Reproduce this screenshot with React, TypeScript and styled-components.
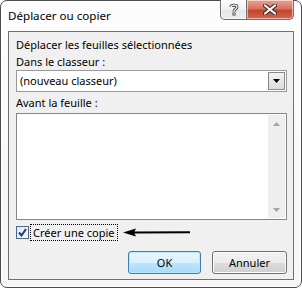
import React from "react";
import styled, { createGlobalStyle } from "styled-components";

const Global = createGlobalStyle`
  html, body { margin: 0; padding: 0; background: #ffffff; }
  * { box-sizing: border-box; }
  body { font-family: "Noto Sans", "Open Sans", sans-serif; font-size: 11px; color: #000; }
`;

const Window = styled.div`
  width: 302px;
  height: 288px;
  border: 1px solid #4b4b4b;
  border-radius: 7px;
  background: linear-gradient(#fdfdfd, #f6f6f7);
  display: flex;
  flex-direction: column;
  padding: 0 7px 7px 7px;
  box-shadow: inset 0 0 0 1px #ffffff;
`;

const TitleBar = styled.div`
  height: 30px;
  display: flex;
  align-items: flex-start;
`;

const Title = styled.div`
  margin-top: 7px;
  flex: 1;
  font-size: 11.6px;
  line-height: 16px;
  color: #000;
`;

const CaptionButton = styled.div<{ $kind: "help" | "close" }>`
  height: 20px;
  margin-top: -1px;
  width: ${(p) => (p.$kind === "close" ? "47px" : "27px")};
  border: 1px solid #6d6d6d;
  border-top: none;
  border-left: ${(p) => (p.$kind === "close" ? "none" : "1px solid #6d6d6d")};
  border-radius: ${(p) => (p.$kind === "close" ? "0 0 5px 0" : "0 0 0 5px")};
  display: flex;
  align-items: center;
  justify-content: center;
  background: ${(p) =>
    p.$kind === "close"
      ? "linear-gradient(#e8a493 0%, #d9725f 45%, #c5452f 55%, #d0634f 100%)"
      : "linear-gradient(#fdfdfd 0%, #eff0f2 50%, #e4e6e9 55%, #eceef0 100%)"};
  box-shadow: inset 0 0 0 1px rgba(255, 255, 255, 0.55);
`;

const Client = styled.div`
  flex: 1;
  border: 1px solid #707070;
  background: #f0f0f0;
  padding: 5px 6px 0 7px;
  display: flex;
  flex-direction: column;
`;

const Label = styled.div<{ $mt?: number }>`
  font-size: 11px;
  line-height: 16px;
  margin-top: ${(p) => p.$mt ?? 0}px;
`;

const Combo = styled.div`
  height: 22px;
  border: 1px solid #9a9a9a;
  background: #fff;
  display: flex;
  align-items: center;
  padding: 0 1px 0 3px;
`;

const ComboText = styled.div`
  flex: 1;
  line-height: 16px;
`;

const DropButton = styled.div`
  width: 17px;
  height: 18px;
  border: 1px solid #8a8a8a;
  background: linear-gradient(#f2f2f2, #dcdcdc);
  display: flex;
  align-items: center;
  justify-content: center;
`;

const ListBox = styled.div`
  height: 107px;
  margin-top: 2px;
  border: 1px solid #828790;
  background: #fff;
  display: flex;
  justify-content: flex-end;
  padding: 1px;
`;

const ScrollTrack = styled.div`
  width: 17px;
  background: #eeeeee;
  display: flex;
  flex-direction: column;
  justify-content: space-between;
  align-items: center;
  padding: 7px 0 6px;
`;

const CheckRow = styled.div`
  margin-top: 4px;
  height: 17px;
  display: flex;
  align-items: center;
`;

const CheckBox = styled.div`
  width: 13px;
  height: 13px;
  border: 1px solid #4a6a8f;
  background: linear-gradient(135deg, #e4e6e9, #fafbfb);
  display: flex;
  align-items: center;
  justify-content: center;
  margin-right: 1px;
`;

const FocusLabel = styled.div`
  border: 1px dotted #000;
  padding: 0 2px 0 2px;
  line-height: 15px;
`;

const ArrowWrap = styled.div`
  margin-left: 5px;
  display: flex;
  align-items: center;
`;

const ButtonRow = styled.div`
  margin-top: 10px;
  display: flex;
  justify-content: flex-end;
  gap: 11px;
`;

const Button = styled.div<{ $default?: boolean; $w: number }>`
  width: ${(p) => p.$w}px;
  height: 23px;
  border: 1px solid ${(p) => (p.$default ? "#3c7fb1" : "#707070")};
  border-radius: 3px;
  display: flex;
  align-items: center;
  justify-content: center;
  background: ${(p) =>
    p.$default
      ? "linear-gradient(#eaf6fd 0%, #d9f0fc 50%, #bee6fd 51%, #a7d9f5 100%)"
      : "linear-gradient(#f2f2f2 0%, #ebebeb 50%, #dddddd 51%, #cfcfcf 100%)"};
  box-shadow: inset 0 0 0 1px ${(p) => (p.$default ? "#b8e6fb" : "#fcfcfc")};
  font-size: 11px;
`;

export default function App() {
  return (
    <>
      <Global />
      <Window>
        <TitleBar>
          <Title>Déplacer ou copier</Title>
          <CaptionButton $kind="help">
            <svg width="10" height="13" viewBox="0 0 10 13">
              <path
                d="M2 4 C2 1.5 8 1.5 8 4 C8 6 5 6 5 8.5"
                fill="none"
                stroke="#3b3b3b"
                strokeWidth="3"
              />
              <path
                d="M2 4 C2 1.5 8 1.5 8 4 C8 6 5 6 5 8.5"
                fill="none"
                stroke="#ffffff"
                strokeWidth="1.2"
              />
              <rect x="3.5" y="9.5" width="3" height="3" fill="#3b3b3b" />
              <rect x="4.3" y="10.3" width="1.4" height="1.4" fill="#ffffff" />
            </svg>
          </CaptionButton>
          <CaptionButton $kind="close">
            <svg width="14" height="11" viewBox="0 0 14 11">
              <path d="M2 1.5 L12 9.5 M12 1.5 L2 9.5" stroke="#4a2a24" strokeWidth="4.2" strokeLinecap="round" />
              <path d="M2 1.5 L12 9.5 M12 1.5 L2 9.5" stroke="#ffffff" strokeWidth="2.2" strokeLinecap="round" />
            </svg>
          </CaptionButton>
        </TitleBar>
        <Client>
          <Label>Déplacer les feuilles sélectionnées</Label>
          <Label $mt={1}>Dans le classeur :</Label>
          <Combo>
            <ComboText>(nouveau classeur)</ComboText>
            <DropButton>
              <svg width="7" height="4" viewBox="0 0 7 4">
                <path d="M0 0 H7 L3.5 4 Z" fill="#000" />
              </svg>
            </DropButton>
          </Combo>
          <Label $mt={3}>Avant la feuille :</Label>
          <ListBox>
            <ScrollTrack>
              <svg width="7" height="4" viewBox="0 0 7 4">
                <path d="M0 4 H7 L3.5 0 Z" fill="#a3a3a3" />
              </svg>
              <svg width="7" height="4" viewBox="0 0 7 4">
                <path d="M0 0 H7 L3.5 4 Z" fill="#a3a3a3" />
              </svg>
            </ScrollTrack>
          </ListBox>
          <CheckRow>
            <CheckBox>
              <svg width="9" height="9" viewBox="0 0 9 9">
                <path d="M1 4.5 L3.5 7.5 L8 1" fill="none" stroke="#1c3a8a" strokeWidth="2" />
              </svg>
            </CheckBox>
            <FocusLabel>Créer une copie</FocusLabel>
            <ArrowWrap>
              <svg width="68" height="9" viewBox="0 0 68 9">
                <path d="M11 3.6 L67 3.2 L67 5.2 L11 5.6 Z" fill="#000" />
                <path d="M0 4.5 L13 0.5 L11 4.5 L13 8.5 Z" fill="#000" />
              </svg>
            </ArrowWrap>
          </CheckRow>
          <ButtonRow>
            <Button $default $w={73}>OK</Button>
            <Button $w={75}>Annuler</Button>
          </ButtonRow>
        </Client>
      </Window>
    </>
  );
}
